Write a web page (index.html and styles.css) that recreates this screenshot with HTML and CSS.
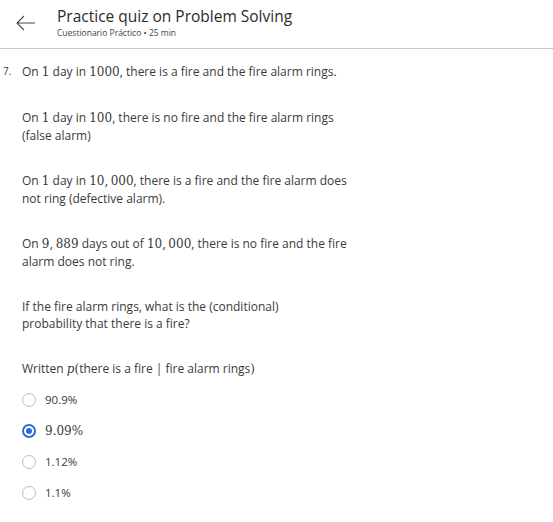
FILE: index.html
```html
<!DOCTYPE html>
<html>
<head>
<meta charset="utf-8">
<link rel="stylesheet" href="styles.css">
</head>
<body>
<header class="header">
  <div class="back">
    <svg width="20" height="16" viewBox="0 0 20 16"><path d="M8 1 L1 8 L8 15 M1 8 H19" fill="none" stroke="#444" stroke-width="1.1"/></svg>
  </div>
  <div class="titles">
    <div class="title">Practice quiz on Problem Solving</div>
    <div class="subtitle">Cuestionario Práctico • 25 min</div>
  </div>
</header>
<main class="question">
  <div class="num">7.</div>
  <div class="body">
    <p>On <span class="m">1</span> day in <span class="m">1000</span>, there is a fire and the fire alarm rings.</p>
    <p>On <span class="m">1</span> day in <span class="m">100</span>, there is no fire and the fire alarm rings (false alarm)</p>
    <p>On <span class="m">1</span> day in <span class="m">10,&#8201;000</span>, there is a fire and the fire alarm does not ring (defective alarm).</p>
    <p>On <span class="m">9,&#8201;889</span> days out of <span class="m">10,&#8201;000</span>, there is no fire and the fire alarm does not ring.</p>
    <p>If the fire alarm rings, what is the (conditional)<br>probability that there is a fire?</p>
    <p>Written <span class="m mi">p</span><span class="m">(</span>there is a fire | fire alarm rings<span class="m">)</span></p>
    <div class="options">
      <label class="opt"><span class="radio"></span><span>90.9%</span></label>
      <label class="opt"><span class="radio on"></span><span class="m">9.09%</span></label>
      <label class="opt"><span class="radio"></span><span>1.12%</span></label>
      <label class="opt"><span class="radio"></span><span>1.1%</span></label>
    </div>
  </div>
</main>
</body>
</html>
```
FILE: styles.css
```css
html, body {
  margin: 0;
  padding: 0;
  background: #fff;
  font-family: "Open Sans", "Noto Sans", sans-serif;
  color: #3a3a3a;
}
.header {
  display: flex;
  align-items: flex-start;
  height: 49px;
  border-bottom: 1px solid #c8c8c8;
  box-sizing: border-box;
}
.back {
  width: 57px;
  padding: 15px 0 0 16px;
  box-sizing: border-box;
}
.back svg { display: block; }
.titles { padding-top: 5px; }
.title {
  font-size: 15.5px;
  line-height: 22px;
  color: #2b2b2b;
}
.subtitle {
  font-size: 8.5px;
  line-height: 11px;
  color: #444;
}
.question {
  display: flex;
  padding: 14px 0 0 3px;
}
.num {
  width: 19px;
  font-size: 10px;
  line-height: 17px;
  color: #444;
}
.body {
  width: 328px;
  font-size: 12px;
  line-height: 17.5px;
}
.body p {
  margin: 0 0 27px 0;
}
.m {
  font-family: "DejaVu Serif", "Liberation Serif", serif;
  font-size: 12px;
}
.mi { font-style: italic; }
.options {
  display: flex;
  flex-direction: column;
  gap: 13px;
  margin-top: -14px;
}
.opt {
  display: flex;
  align-items: center;
  gap: 9px;
  font-size: 11.5px;
  line-height: 18px;
  height: 18px;
}
.radio {
  width: 14px;
  height: 14px;
  border: 1.5px solid #bdbdbd;
  border-radius: 50%;
  box-sizing: border-box;
  position: relative;
}
.radio.on {
  border: 2px solid #2a6fd6;
}
.radio.on::after {
  content: "";
  position: absolute;
  left: 2px;
  top: 2px;
  width: 6px;
  height: 6px;
  border-radius: 50%;
  background: #2a6fd6;
}
```
